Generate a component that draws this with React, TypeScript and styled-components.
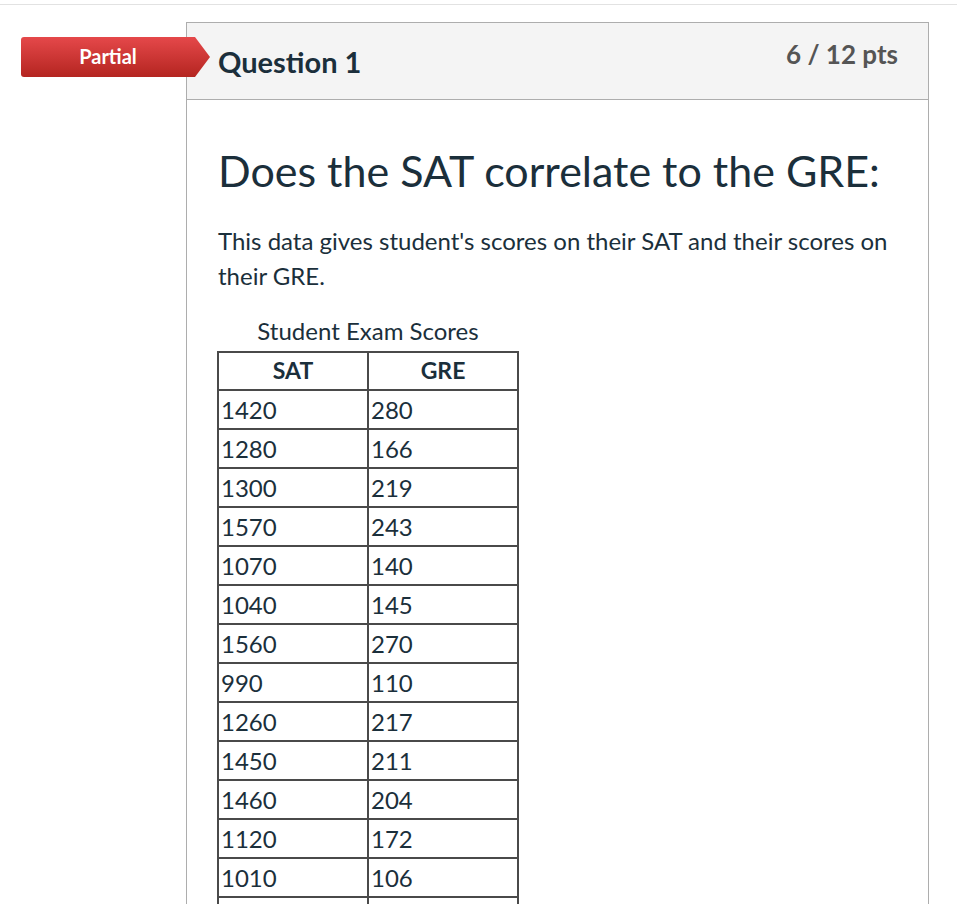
import * as React from 'react';
import styled, { createGlobalStyle } from 'styled-components';

const GlobalStyle = createGlobalStyle`
  html, body {
    margin: 0;
    padding: 0;
    background: #fff;
    font-family: Lato, "Open Sans", "Liberation Sans", sans-serif;
    color: #1b2f3b;
  }
`;

const TopRule = styled.div`
  height: 4px;
  border-bottom: 1px solid #e2e2e2;
`;

const Page = styled.div`
  padding: 17px 0 0 186px;
`;

const QuestionPanel = styled.div`
  position: relative;
  width: 743px;
  box-sizing: border-box;
  border: 1px solid #adadad;
  border-bottom: none;
`;

const StatusBadge = styled.div`
  position: absolute;
  left: -166px;
  top: 14px;
  width: 189px;
  height: 40px;
  box-sizing: border-box;
  padding: 0 15px 3px 0;
  display: flex;
  align-items: center;
  justify-content: center;
  background: linear-gradient(#e5484a, #b42520);
  border-radius: 3px 0 0 3px;
  clip-path: polygon(0 0, calc(100% - 15px) 0, 100% 50%, calc(100% - 15px) 100%, 0 100%);
  color: #fff;
  font-size: 20px;
  font-weight: 700;
`;

const Header = styled.div`
  height: 77px;
  box-sizing: border-box;
  padding: 0 30px 0 31px;
  display: flex;
  justify-content: space-between;
  align-items: flex-start;
  background: #f4f4f4;
  border-bottom: 1px solid #adadad;
`;

const QuestionName = styled.h3`
  margin: 21px 0 0;
  font-size: 29px;
  line-height: normal;
  font-weight: 700;
  color: #1b2f3b;
`;

const Points = styled.div`
  margin-top: 15px;
  font-size: 26px;
  font-weight: 700;
  color: #555;
`;

const Body = styled.div`
  padding: 45px 30px 0 31px;
`;

const Heading = styled.h2`
  margin: 0 0 26px;
  font-size: 43px;
  font-weight: 400;
  line-height: 52px;
  color: #1b2f3b;
`;

const Paragraph = styled.p`
  margin: 0 0 21px;
  font-size: 24px;
  line-height: 35px;
`;

const ScoreTable = styled.table`
  border-collapse: collapse;
  width: 302px;
  margin-left: -1px;
  font-size: 24px;
  color: #1b2f3b;
`;

const Caption = styled.caption`
  font-size: 24px;
  line-height: 33px;
  padding-bottom: 4px;
`;

const HeadCell = styled.th`
  width: 50%;
  border: 2px solid #4a4a4a;
  padding: 1px 2px 2px;
  font-size: 23px;
  line-height: 33px;
  font-weight: 700;
  text-align: center;
`;

const Cell = styled.td`
  border: 2px solid #4a4a4a;
  padding: 2px 2px;
  line-height: 33px;
  text-align: left;
`;

const scores: [string, string][] = [
  ['1420', '280'],
  ['1280', '166'],
  ['1300', '219'],
  ['1570', '243'],
  ['1070', '140'],
  ['1040', '145'],
  ['1560', '270'],
  ['990', '110'],
  ['1260', '217'],
  ['1450', '211'],
  ['1460', '204'],
  ['1120', '172'],
  ['1010', '106'],
  ['\u00a0', '\u00a0'],
];

function App(): JSX.Element {
  return (
    <>
      <GlobalStyle />
      <TopRule />
      <Page>
        <QuestionPanel>
          <StatusBadge>Partial</StatusBadge>
          <Header>
            <QuestionName>Question 1</QuestionName>
            <Points>6 / 12 pts</Points>
          </Header>
          <Body>
            <Heading>Does the SAT correlate to the GRE:</Heading>
            <Paragraph>
              This data gives student's scores on their SAT and their scores on their GRE.
            </Paragraph>
            <ScoreTable>
              <Caption>Student Exam Scores</Caption>
              <thead>
                <tr>
                  <HeadCell>SAT</HeadCell>
                  <HeadCell>GRE</HeadCell>
                </tr>
              </thead>
              <tbody>
                {scores.map(([sat, gre], i) => (
                  <tr key={i}>
                    <Cell>{sat}</Cell>
                    <Cell>{gre}</Cell>
                  </tr>
                ))}
              </tbody>
            </ScoreTable>
          </Body>
        </QuestionPanel>
      </Page>
    </>
  );
}

export default App;
